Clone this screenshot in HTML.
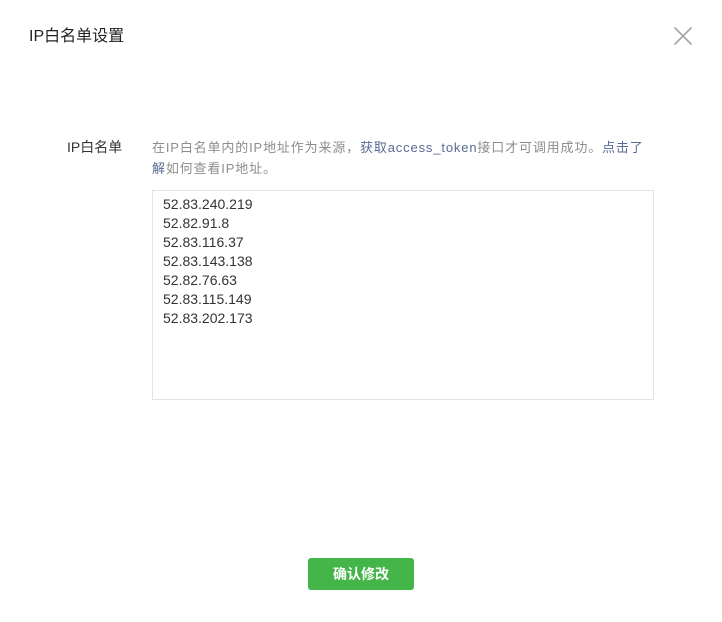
<!DOCTYPE html>
<html><head><meta charset="utf-8"><style>
html,body{margin:0;padding:0;background:#fff;}
body{width:722px;height:622px;position:relative;overflow:hidden;font-family:"Liberation Sans","Noto Sans CJK SC",sans-serif;}
.t{position:absolute;left:29px;top:27px;font-size:16px;color:#222;line-height:20px;}
.x{position:absolute;left:673px;top:26px;}
.lab{position:absolute;left:67px;top:137px;font-size:14px;color:#333;line-height:20px;}
.desc{position:absolute;left:152px;top:137px;width:520px;font-size:13px;color:#8d8d8d;line-height:21px;letter-spacing:0.85px;white-space:nowrap;}
.desc a{color:#576b95;text-decoration:none;}
.ta{position:absolute;left:152px;top:190px;width:500px;height:208px;border:1px solid #e4e4e4;box-sizing:content-box;}
.ta div{position:absolute;left:10px;top:4px;font-size:14px;color:#333;line-height:19px;}
.btn{position:absolute;left:308px;top:558px;width:106px;height:32px;background:#44b549;border-radius:3px;color:#fff;font-size:14px;line-height:32px;text-align:center;font-weight:bold;}
</style></head><body>
<div class="t">IP白名单设置</div>
<svg class="x" width="20" height="20" viewBox="0 0 20 20"><path d="M1.5 1.5L18.5 18.5M18.5 1.5L1.5 18.5" stroke="#a5a5a5" stroke-width="1.6"/></svg>
<div class="lab">IP白名单</div>
<div class="desc">在IP白名单内的IP地址作为来源，<a>获取access_token</a>接口才可调用成功。<a>点击了</a><br><a>解</a>如何查看IP地址。</div>
<div class="ta"><div>52.83.240.219<br>52.82.91.8<br>52.83.116.37<br>52.83.143.138<br>52.82.76.63<br>52.83.115.149<br>52.83.202.173</div></div>
<div class="btn">确认修改</div>
</body></html>
